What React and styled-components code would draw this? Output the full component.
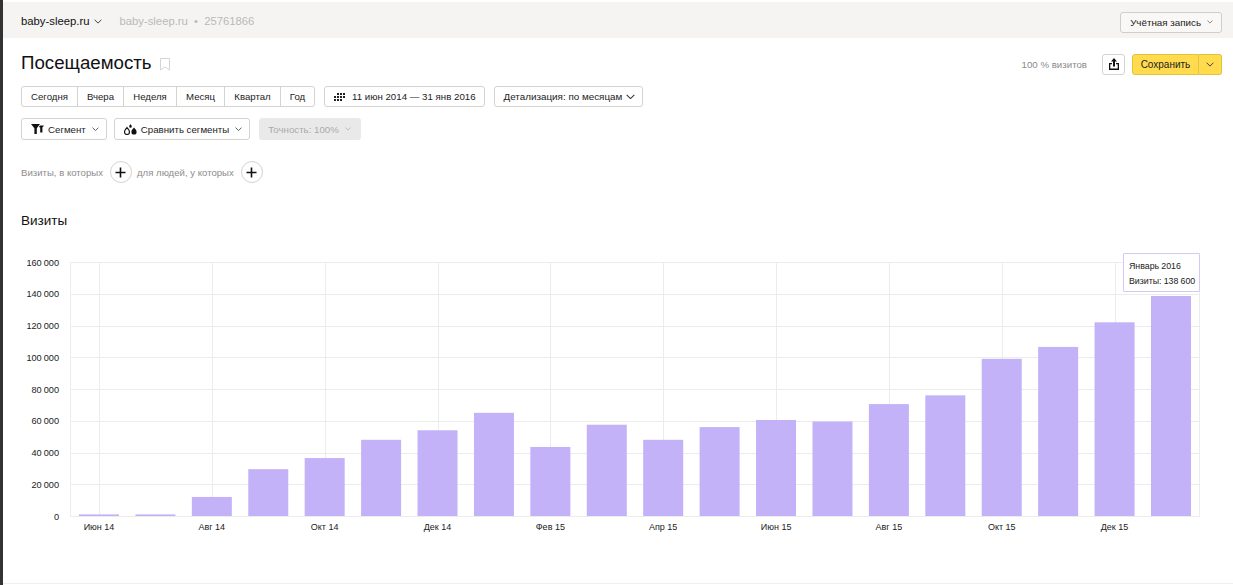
import React from "react";
import styled, { createGlobalStyle } from "styled-components";

const Global = createGlobalStyle`
  html, body { margin: 0; padding: 0; background: #fff; }
  body { font-family: "Liberation Sans", Arial, sans-serif; color: #111; overflow: hidden; }
  * { box-sizing: border-box; }
`;

const Page = styled.div`
  width: 1233px;
  height: 585px;
  border-left: 3px solid #333;
  display: flex;
  flex-direction: column;
  overflow: hidden;
  position: relative;
`;

const TopBar = styled.header`
  margin-top: 2px;
  height: 36px;
  flex: none;
  background: #f5f4f2;
  display: flex;
  align-items: center;
  padding: 2px 11px 0 18px;
`;

const SiteName = styled.div`
  font-size: 11.3px;
  color: #111;
  display: flex;
  align-items: center;
  gap: 5px;
`;

const CounterInfo = styled.div`
  margin-left: 17px;
  font-size: 11.3px;
  color: #b9b9b9;
  word-spacing: 3px;
`;

const Btn = styled.button`
  font-family: inherit;
  font-size: ${(p) => p.$fs || 9.7}px;
  color: #222;
  background: #fff;
  border: 1px solid #d4d3d0;
  border-radius: 3px;
  height: ${(p) => p.$h || 22}px;
  padding: 0 ${(p) => p.$pr ?? 7}px 0 9px;
  display: inline-flex;
  align-items: center;
  gap: ${(p) => p.$gap ?? 4}px;
  white-space: nowrap;
  flex: none;
`;

const AccountBtn = styled(Btn)`
  margin-left: auto;
  margin-top: 2px;
  background: #f9f8f6;
  border-color: #cfcecb;
  height: 21px;
  font-size: 9.8px;
  gap: 6px;
`;

const Content = styled.main`
  flex: 1;
  display: flex;
  flex-direction: column;
  padding: 0 11px 0 18px;
`;

const TitleRow = styled.div`
  display: flex;
  align-items: center;
  height: 48px;
  padding-top: 1px;
`;

const Title = styled.h1`
  margin: 0;
  font-size: 18.7px;
  font-weight: 400;
`;

const Bookmark = styled.svg`
  margin-left: 8px;
  margin-top: 3px;
`;

const RightTools = styled.div`
  margin-left: auto;
  margin-top: 3px;
  display: flex;
  align-items: center;
`;

const Share = styled.div`
  font-size: 9.7px;
  color: #8a8a8a;
  margin-right: 15px;
`;

const IconBtn = styled(Btn)`
  width: 23px;
  height: 21px;
  padding: 0;
  justify-content: center;
  margin-right: 7px;
`;

const SaveGroup = styled.div`
  display: flex;
  height: 21px;
`;

const SaveBtn = styled.button`
  font-family: inherit;
  font-size: 10px;
  color: #222;
  background: #ffdb4d;
  border: 1px solid #e3c23e;
  border-radius: ${(p) => (p.$end ? "0 3px 3px 0" : "3px 0 0 3px")};
  border-left-width: ${(p) => (p.$end ? 0 : 1)}px;
  width: ${(p) => (p.$end ? 23 : 67)}px;
  padding: 0;
  display: flex;
  align-items: center;
  justify-content: center;
`;

const Row = styled.div`
  display: flex;
  align-items: center;
  gap: ${(p) => p.$gap || 8}px;
  margin-top: ${(p) => p.$mt || 0}px;
`;

const Segmented = styled.div`
  display: flex;
  height: 21px;
  background: #fff;
  border: 1px solid #d4d3d0;
  border-radius: 3px;
`;

const SegItem = styled.div`
  font-size: 9.6px;
  color: #222;
  width: ${(p) => p.$w}px;
  display: flex;
  align-items: center;
  justify-content: center;
  border-left: ${(p) => (p.$first ? "none" : "1px solid #d4d3d0")};
`;

const ChevronGap = styled.span`
  display: inline-flex;
  margin-left: 2px;
`;

const DisabledBtn = styled.div`
  height: 22px;
  width: 102px;
  flex: none;
  white-space: nowrap;
  background: #e9e9e9;
  border-radius: 3px;
  font-size: 9.7px;
  color: #a9a9a9;
  display: flex;
  align-items: center;
  padding: 0 9px;
  gap: 6px;
  margin-left: 2px;
`;

const Hint = styled.span`
  font-size: 9.6px;
  color: #8d8d8d;
  margin-right: ${(p) => p.$mr || 0}px;
`;

const PlusCircle = styled.div`
  width: 22px;
  height: 22px;
  border-radius: 50%;
  border: 1px solid #d4d3d0;
  background: #fff;
  display: flex;
  align-items: center;
  justify-content: center;
`;

const SectionTitle = styled.h2`
  margin: 30px 0 0;
  font-size: 13.5px;
  font-weight: 400;
  line-height: 16px;
`;

const ChartWrap = styled.div`
  position: relative;
  margin: 24px 0 0 -18px;
  width: 1230px;
  height: 282px;
  flex: none;
`;

const Tooltip = styled.div`
  position: absolute;
  left: 1120px;
  top: 0;
  width: 77px;
  height: 39px;
  background: #fff;
  border: 1px solid #d3c8f6;
  border-radius: 1px;
  padding: 5px 0 0 5px;
  font-size: 8.8px;
  line-height: 15px;
  word-spacing: -0.3px;
  color: #222;
  white-space: nowrap;
`;

const BottomLine = styled.div`
  position: absolute;
  left: 0;
  right: 0;
  bottom: 1px;
  height: 1px;
  background: #efefef;
`;

const Chevron = ({ size = 8, color = "#333" }) => (
  <svg width={size} height={size * 0.625} viewBox="0 0 8 5" fill="none">
    <path d="M0.6 0.7 L4 4.1 L7.4 0.7" stroke={color} strokeWidth="0.9" />
  </svg>
);

const CalIcon = () => (
  <svg width="11" height="9" viewBox="0 0 11 9" fill="#222">
    <rect x="0" y="4" width="2" height="2" /><rect x="0" y="7" width="2" height="2" />
    <rect x="3" y="1" width="2" height="2" /><rect x="3" y="4" width="2" height="2" /><rect x="3" y="7" width="2" height="2" />
    <rect x="6" y="1" width="2" height="2" /><rect x="6" y="4" width="2" height="2" /><rect x="6" y="7" width="2" height="2" />
    <rect x="9" y="1" width="2" height="2" /><rect x="9" y="4" width="2" height="2" />
  </svg>
);

const FilterIcon = () => (
  <svg width="13" height="10" viewBox="0 0 13 10" fill="#111">
    <path d="M0 0 H9 L5.8 4.2 V10 H3.4 V4.2 Z" />
    <path d="M9 1.4 H13 L11.4 3.6 V8.6 H9.2 V3.6 L7.9 3 Z" />
  </svg>
);

const DropsIcon = () => (
  <svg width="13" height="11" viewBox="0 0 13 11">
    <path d="M3 3.6 C4 5 5.5 6 5.5 8 A2.5 2.5 0 0 1 0.5 8 C0.5 6 2 5 3 3.6 Z" fill="none" stroke="#111" strokeWidth="1.2" />
    <path d="M10 3.6 C11 5 12.6 6 12.6 8 A2.6 2.6 0 0 1 7.4 8 C7.4 6 9 5 10 3.6 Z" fill="#111" />
    <path d="M6.5 0 C7 0.9 7.8 1.5 7.8 2.4 A1.3 1.3 0 0 1 5.2 2.4 C5.2 1.5 6 0.9 6.5 0 Z" fill="#111" />
  </svg>
);

const ShareIcon = () => (
  <svg width="10" height="12" viewBox="0 0 10 12" fill="#111">
    <path d="M0 5 H3 V6.2 H1.3 V10.4 H8.7 V6.2 H7 V5 H10 V12 H0 Z" />
    <path d="M5 0 L8 3.4 H6 V8.6 H4 V3.4 H2 Z" />
  </svg>
);

const Plus = () => (
  <svg width="11" height="11" viewBox="0 0 11 11" fill="none" stroke="#111" strokeWidth="1.6">
    <path d="M5.5 0.5 V10.5 M0.5 5.5 H10.5" />
  </svg>
);

const values = [1000, 1000, 12000, 29500, 36500, 48000, 54000, 65000, 43500, 57500, 48000, 56000, 60500, 59500, 70500, 76000, 99000, 106500, 122000, 138600];
const xLabels = { 0: "Июн 14", 2: "Авг 14", 4: "Окт 14", 6: "Дек 14", 8: "Фев 15", 10: "Апр 15", 12: "Июн 15", 14: "Авг 15", 16: "Окт 15", 18: "Дек 15" };
const yTicks = [0, 20000, 40000, 60000, 80000, 100000, 120000, 140000, 160000];

const fmt = (n) => String(n).replace(/\B(?=(\d{3})+$)/g, " ");

const OX = 3;
const OY = 253;
const plotL = 70 - OX;
const plotR = 1200 - OX;
const plotT = 262 - OY;
const plotB = 516 - OY;
const yOf = (v) => plotB - (v / 160000) * (plotB - plotT);
const xOf = (i) => 99 - OX + i * 56.42;

const ChartSvg = styled.svg`
  display: block;
  font-family: "Liberation Sans", Arial, sans-serif;
`;

const Chart = () => (
  <ChartSvg width="1230" height="282" viewBox="0 0 1230 282">
    {yTicks.map((t) => (
      <g key={t}>
        <line x1={plotL} x2={plotR} y1={Math.round(yOf(t)) + 0.5} y2={Math.round(yOf(t)) + 0.5} stroke="#ececec" />
        <text x={plotL - 11} y={yOf(t) + 3.5} textAnchor="end" fontSize="9.2" wordSpacing="-0.6" fill="#222">{fmt(t)}</text>
      </g>
    ))}
    <line x1={plotL + 0.5} x2={plotL + 0.5} y1={plotT} y2={plotB} stroke="#ececec" />
    <line x1={plotR - 0.5} x2={plotR - 0.5} y1={plotT} y2={plotB} stroke="#ececec" />
    {Object.keys(xLabels).map((k) => (
      <g key={k}>
        <line x1={Math.round(xOf(+k)) + 0.5} x2={Math.round(xOf(+k)) + 0.5} y1={plotT} y2={plotB} stroke="#ececec" />
        <text x={xOf(+k)} y={plotB + 14} textAnchor="middle" fontSize="9" fill="#222">{xLabels[k]}</text>
      </g>
    ))}
    {values.map((v, i) => (
      <rect key={i} x={xOf(i) - 20} y={yOf(v)} width="40" height={plotB - yOf(v)} fill="#c3b2f8" />
    ))}
  </ChartSvg>
);

export default function App() {
  return (
    <Page>
      <Global />
      <TopBar>
        <SiteName>baby-sleep.ru <Chevron /></SiteName>
        <CounterInfo>baby-sleep.ru • 25761866</CounterInfo>
        <AccountBtn $pr={8}>Учётная запись <Chevron size={6} color="#555" /></AccountBtn>
      </TopBar>
      <Content>
        <TitleRow>
          <Title>Посещаемость</Title>
          <Bookmark width="10" height="13" viewBox="0 0 10 13" fill="none" stroke="#d5d5d5">
            <path d="M0.5 0.5 H9.5 V12 L5 9 L0.5 12 Z" />
          </Bookmark>
          <RightTools>
            <Share>100 % визитов</Share>
            <IconBtn><ShareIcon /></IconBtn>
            <SaveGroup>
              <SaveBtn>Сохранить</SaveBtn>
              <SaveBtn $end><Chevron /></SaveBtn>
            </SaveGroup>
          </RightTools>
        </TitleRow>
        <Row $gap={9}>
          <Segmented>
            <SegItem $first $w={55}>Сегодня</SegItem>
            <SegItem $w={46}>Вчера</SegItem>
            <SegItem $w={53}>Неделя</SegItem>
            <SegItem $w={48}>Месяц</SegItem>
            <SegItem $w={56}>Квартал</SegItem>
            <SegItem $w={34}>Год</SegItem>
          </Segmented>
          <Btn $h={21} $gap={7} $pr={8}><CalIcon /> 11 июн 2014 — 31 янв 2016</Btn>
          <Btn $h={21} $fs={9.85}>Детализация: по месяцам <Chevron size={9} /></Btn>
        </Row>
        <Row $mt={11} $gap={7}>
          <Btn><FilterIcon /> Сегмент <ChevronGap><Chevron size={7} /></ChevronGap></Btn>
          <Btn><DropsIcon /> Сравнить сегменты <ChevronGap><Chevron size={7} /></ChevronGap></Btn>
          <DisabledBtn>Точность: 100% <Chevron size={6} color="#aaa" /></DisabledBtn>
        </Row>
        <Row $mt={21} $gap={5}>
          <Hint $mr={2}>Визиты, в которых</Hint>
          <PlusCircle><Plus /></PlusCircle>
          <Hint $mr={2}>для людей, у которых</Hint>
          <PlusCircle><Plus /></PlusCircle>
        </Row>
        <SectionTitle>Визиты</SectionTitle>
        <ChartWrap>
          <Chart />
          <Tooltip>Январь 2016<br />Визиты: 138 600</Tooltip>
        </ChartWrap>
      </Content>
      <BottomLine />
    </Page>
  );
}
